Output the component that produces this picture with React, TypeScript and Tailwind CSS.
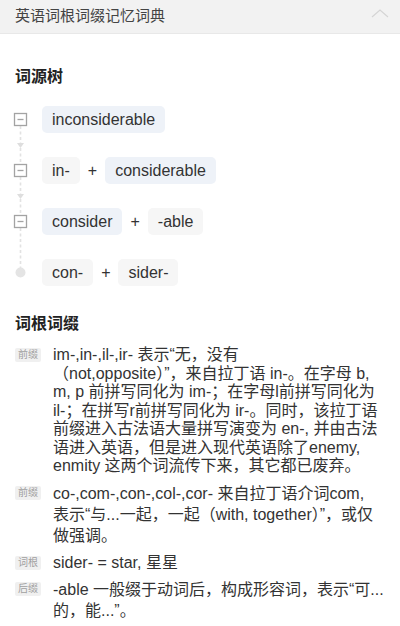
import React from 'react';

const font = { fontFamily: '"Liberation Sans", "Noto Sans CJK SC", sans-serif' };

function Chip({ text, blue }: { text: string; blue?: boolean }) {
  return (
    <span
      className={`h-[27px] px-[10px] rounded-[5px] flex items-center text-[16px] text-[#333] ${
        blue ? 'bg-[#eef2f8]' : 'bg-[#f6f6f6]'
      }`}
    >
      {text}
    </span>
  );
}

function Plus() {
  return <span className="text-[16px] text-[#333] px-[8px]">+</span>;
}

function TreeLines() {
  const box = (cy: number) => (
    <g key={cy}>
      <rect x={14.5} y={cy - 6} width={12} height={12} fill="#fff" stroke="#a3a3a3" strokeWidth={1.3} />
      <line x1={17.5} y1={cy} x2={23.5} y2={cy} stroke="#a3a3a3" strokeWidth={1.3} />
    </g>
  );
  const dash = (y1: number, y2: number) => (
    <line x1={20.5} y1={y1} x2={20.5} y2={y2} stroke="#e2e2e2" strokeWidth={1.6} strokeDasharray="3 2.5" />
  );
  const arrow = (y: number) => <polygon points={`17,${y} 24,${y} 20.5,${y + 5}`} fill="#dedede" />;
  return (
    <svg width={42} height={180} className="shrink-0">
      {dash(20, 58)}
      {arrow(37)}
      {dash(71, 109)}
      {arrow(88)}
      {dash(122, 162)}
      {box(13.5)}
      {box(64.5)}
      {box(115.5)}
      <circle cx={20.5} cy={166.5} r={5} fill="#e4e4e4" />
    </svg>
  );
}

function Entry({ tag, lines, tall }: { tag: string; lines: string[]; tall?: boolean }) {
  return (
    <div className="flex pl-[15px] pr-[10px]">
      <span className="shrink-0 mt-[2px] h-[14px] px-[3px] rounded-[2px] bg-[#f0f0f0] text-[10px] leading-[14px] text-[#a0a0a0]">
        {tag}
      </span>
      <div className={`ml-[12px] text-[16px] text-[#333] ${tall ? 'leading-[21px] -mt-[1px]' : 'leading-[18.5px]'}`}>
        {lines.map((l, i) => (
          <div key={i} className="whitespace-nowrap">
            {l}
          </div>
        ))}
      </div>
    </div>
  );
}

export default function App() {
  return (
    <div className="w-[400px] h-[626px] bg-white overflow-hidden" style={font}>
      {/* Header */}
      <div className="h-[34px] bg-[#f2f2f2] border-b border-[#e8e8e8] px-[15px] flex items-center justify-between">
        <span className="text-[15px] text-[#444]">英语词根词缀记忆词典</span>
        <svg width={18} height={10} viewBox="0 0 18 10" className="mr-[-4px] mb-[6px]">
          <polyline points="1,8 9,1 17,8" fill="none" stroke="#d4d4d4" strokeWidth={1.1} />
        </svg>
      </div>

      {/* 词源树 */}
      <h2 className="mt-[32px] px-[15px] text-[16px] leading-[22px] font-semibold text-[#222]">词源树</h2>
      <div className="mt-[18px] flex">
        <TreeLines />
        <div className="flex flex-col gap-[24px]">
          <div className="flex items-center">
            <Chip text="inconsiderable" blue />
          </div>
          <div className="flex items-center">
            <Chip text="in-" />
            <Plus />
            <Chip text="considerable" blue />
          </div>
          <div className="flex items-center">
            <Chip text="consider" blue />
            <Plus />
            <Chip text="-able" />
          </div>
          <div className="flex items-center">
            <Chip text="con-" />
            <Plus />
            <Chip text="sider-" />
          </div>
        </div>
      </div>

      {/* 词根词缀 */}
      <h2 className="mt-[27px] px-[15px] text-[16px] leading-[22px] font-semibold text-[#222]">词根词缀</h2>
      <div className="mt-[11px] flex flex-col gap-[8px]">
        <Entry
          tag="前缀"
          lines={[
            'im-,in-,il-,ir- 表示“无，没有',
            '（not,opposite）”，来自拉丁语 in-。在字母 b,',
            'm, p 前拼写同化为 im-；在字母l前拼写同化为',
            'il-；在拼写r前拼写同化为 ir-。同时，该拉丁语',
            '前缀进入古法语大量拼写演变为 en-, 并由古法',
            '语进入英语，但是进入现代英语除了enemy,',
            'enmity 这两个词流传下来，其它都已废弃。',
          ]}
        />
        <Entry
          tall
          tag="前缀"
          lines={[
            'co-,com-,con-,col-,cor- 来自拉丁语介词com,',
            '表示“与...一起，一起（with, together）”，或仅',
            '做强调。',
          ]}
        />
        <Entry tag="词根" lines={['sider- = star, 星星']} />
        <Entry tall tag="后缀" lines={['-able 一般缀于动词后，构成形容词，表示“可...', '的，能...”。']} />
      </div>
    </div>
  );
}
